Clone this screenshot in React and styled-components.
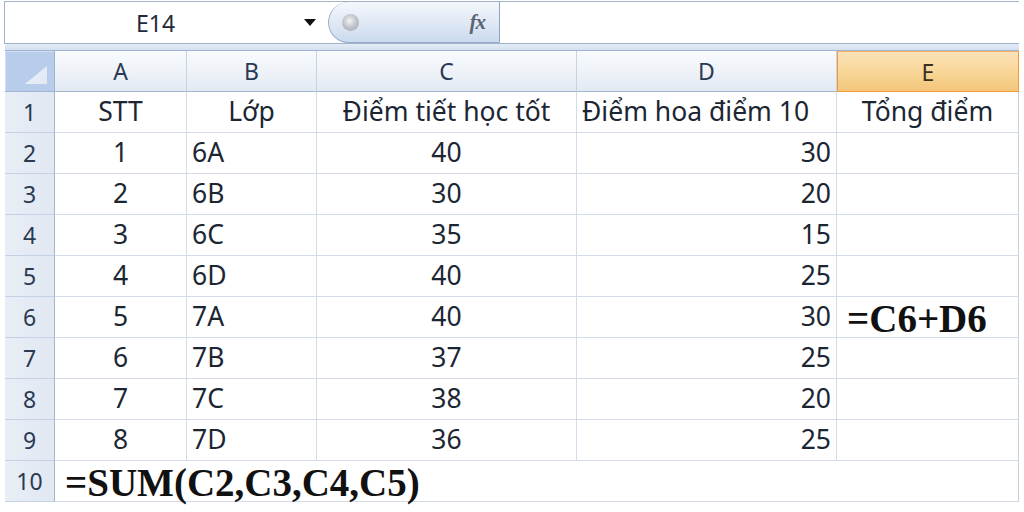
import React from "react";
import styled, { createGlobalStyle, css } from "styled-components";

const GlobalStyle = createGlobalStyle`
  html, body { margin: 0; padding: 0; background: #ffffff; }
  body { overflow: hidden; }
  * { box-sizing: border-box; }
`;

const Window = styled.div`
  width: 1024px;
  height: 512px;
  padding: 1px 5px 0 4px;
  background: #ffffff;
  font-family: "Noto Sans", "Open Sans", sans-serif;
`;

const FormulaRow = styled.div`
  display: flex;
  height: 43px;
  border: 1px solid #9fb2ca;
  border-right: none;
  background: #ffffff;
`;

const NameBox = styled.div`
  display: flex;
  align-items: center;
  width: 322px;
  padding-left: 2px;
`;

const NameText = styled.div`
  flex: 1;
  text-align: center;
  font-size: 23px;
  color: #1f2a3a;
`;

const Arrow = styled.div`
  width: 0;
  height: 0;
  margin-right: 11px;
  border-left: 6px solid transparent;
  border-right: 6px solid transparent;
  border-top: 7px solid #111;
`;

const FxButton = styled.div`
  display: flex;
  align-items: center;
  justify-content: space-between;
  width: 172px;
  margin: 0 0 0 1px;
  padding: 0 14px 0 13px;
  border: 1px solid #98aecb;
  border-top: none;
  border-right: 1px solid #8ea3bf;
  border-radius: 22px 0 0 22px;
  background: linear-gradient(#f4f7fc 0%, #e1e9f5 50%, #cbdaee 100%);
`;

const Knob = styled.div`
  width: 17px;
  height: 17px;
  border-radius: 50%;
  background: radial-gradient(circle at 45% 40%, #f2f2f2 0%, #bfc3c9 50%, #9ca1a9 100%);
`;

const Fx = styled.span`
  font-family: "Liberation Serif", serif;
  font-style: italic;
  font-weight: bold;
  font-size: 21px;
  color: #5a6574;
  letter-spacing: -1px;
`;

const FormulaInput = styled.div`
  flex: 1;
  background: #ffffff;
`;

const Strip = styled.div`
  height: 7px;
  margin-left: 1px;
  background: linear-gradient(#e4ecf7, #d5e1f1);
  border-bottom: 1px solid #9db3cf;
`;

const Grid = styled.div`
  display: grid;
  grid-template-columns: 50px 132px 130px 260px 260px 182px;
  grid-template-rows: repeat(11, 41px);
  margin-left: 1px;
  font-size: 26.5px;
  color: #1c2633;
`;

const Corner = styled.div`
  position: relative;
  background: #b7cdeb;
  border-right: 1px solid #9eb6ce;
  border-bottom: 1px solid #9eb6ce;
  box-shadow: inset 1px 1px 0 #d2e0f3;
`;

const CornerTri = styled.div`
  position: absolute;
  right: 7px;
  bottom: 7px;
  width: 22px;
  height: 18px;
  background: linear-gradient(135deg, #f0f4fa, #dfe7f2);
  clip-path: polygon(100% 0, 100% 100%, 0 100%);
`;

const ColHead = styled.div`
  display: flex;
  align-items: center;
  justify-content: center;
  border-right: 1px solid #c7d3e3;
  border-bottom: 1px solid #9eb6ce;
  background: linear-gradient(#f8fafd 0%, #eef2f8 55%, #e2e9f3 100%);
  color: #2a3a52;
  font-size: 23px;
  ${(p) =>
    p.$selected &&
    css`
      background: linear-gradient(#fbe3b8 0%, #f8d595 55%, #f3c57a 100%);
      border: 1px solid #f29a3c;
      border-top: 1px solid #f5b263;
      color: #3a3020;
    `}
`;

const RowHead = styled.div`
  display: flex;
  align-items: center;
  justify-content: center;
  background: linear-gradient(90deg, #e9eef6, #e1e8f2);
  border-right: 1px solid #9eb6ce;
  border-bottom: 1px solid #c5d2e3;
  color: #2a3a52;
  font-size: 23px;
`;

const Cell = styled.div`
  display: flex;
  align-items: center;
  padding: 0 5px 2px;
  border-right: 1px solid #d4dbe8;
  border-bottom: 1px solid #d4dbe8;
  white-space: nowrap;
  justify-content: ${(p) =>
    p.$align === "center" ? "center" : p.$align === "right" ? "flex-end" : "flex-start"};
  ${(p) => p.$last && css`border-right: 1px solid #c6cfdd;`}
`;

const Formula = styled.span`
  font-family: "Liberation Serif", "Times New Roman", serif;
  font-weight: bold;
  font-size: 39px;
  color: #111;
  line-height: 1;
  margin-top: 4px;
  margin-left: ${(p) => p.$indent || 0}px;
`;

const WideCell = styled(Cell)`
  grid-column: 2 / span 5;
  border-right: 1px solid #c6cfdd;
  padding-left: 10px;
`;

const rows = [
  ["1", "6A", "40", "30"],
  ["2", "6B", "30", "20"],
  ["3", "6C", "35", "15"],
  ["4", "6D", "40", "25"],
  ["5", "7A", "40", "30"],
  ["6", "7B", "37", "25"],
  ["7", "7C", "38", "20"],
  ["8", "7D", "36", "25"],
];

export default function App() {
  return (
    <>
      <GlobalStyle />
      <Window>
        <FormulaRow>
          <NameBox>
            <NameText>E14</NameText>
            <Arrow />
          </NameBox>
          <FxButton>
            <Knob />
            <Fx>fx</Fx>
          </FxButton>
          <FormulaInput />
        </FormulaRow>
        <Strip />
        <Grid>
          <Corner>
            <CornerTri />
          </Corner>
          {["A", "B", "C", "D"].map((c) => (
            <ColHead key={c}>{c}</ColHead>
          ))}
          <ColHead $selected>E</ColHead>

          <RowHead>1</RowHead>
          <Cell $align="center">STT</Cell>
          <Cell $align="center">Lớp</Cell>
          <Cell $align="center">Điểm tiết học tốt</Cell>
          <Cell $align="left">Điểm hoa điểm 10</Cell>
          <Cell $align="center" $last>Tổng điểm</Cell>

          {rows.map((r, i) => (
            <React.Fragment key={i}>
              <RowHead>{i + 2}</RowHead>
              <Cell $align="center">{r[0]}</Cell>
              <Cell $align="left">{r[1]}</Cell>
              <Cell $align="center">{r[2]}</Cell>
              <Cell $align="right">{r[3]}</Cell>
              <Cell $align="left" $last>
                {i === 4 && <Formula $indent={5}>=C6+D6</Formula>}
              </Cell>
            </React.Fragment>
          ))}

          <RowHead>10</RowHead>
          <WideCell>
            <Formula>=SUM(C2,C3,C4,C5)</Formula>
          </WideCell>
        </Grid>
      </Window>
    </>
  );
}
